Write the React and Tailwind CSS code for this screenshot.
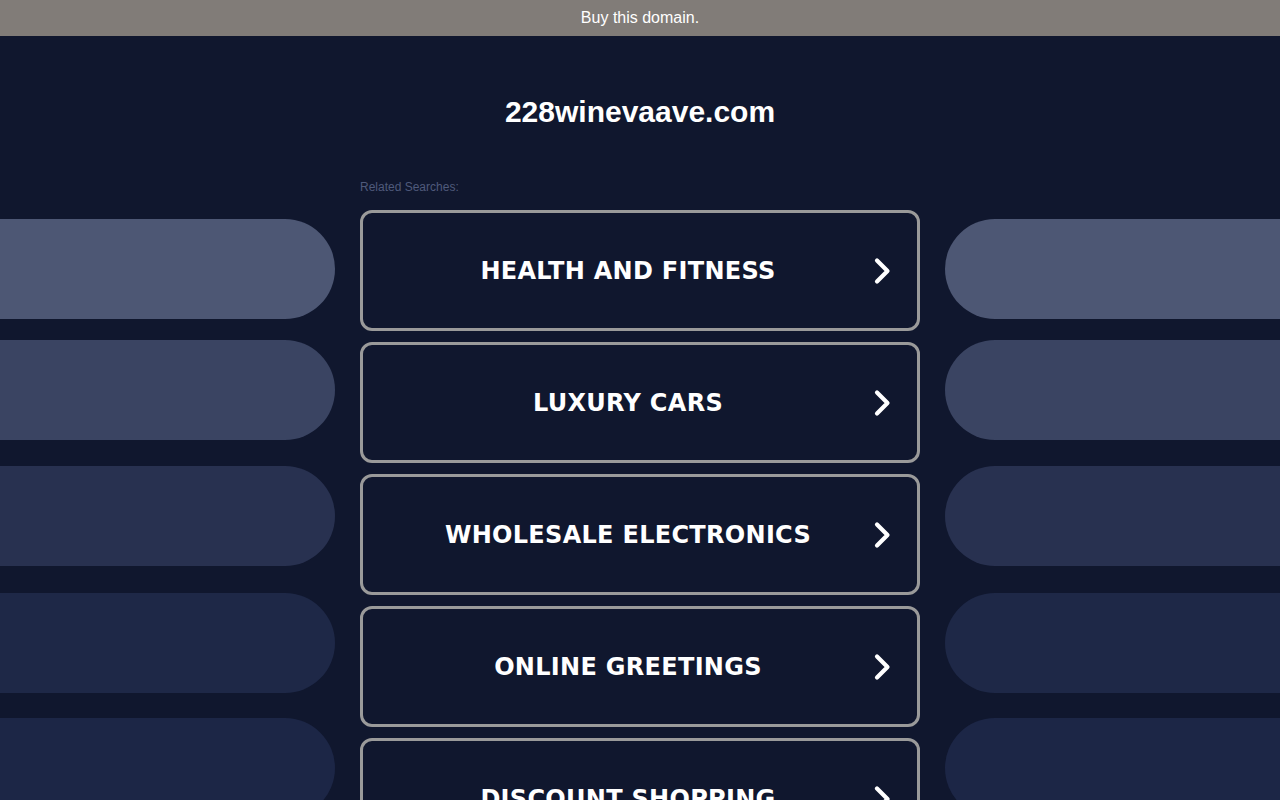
import React from "react";

const items = [
  "HEALTH AND FITNESS",
  "LUXURY CARS",
  "WHOLESALE ELECTRONICS",
  "ONLINE GREETINGS",
  "DISCOUNT SHOPPING",
];

const pills = [
  { top: "top-[219px]", color: "bg-[#4d5774]" },
  { top: "top-[340px]", color: "bg-[#3a4462]" },
  { top: "top-[466px]", color: "bg-[#283150]" },
  { top: "top-[593px]", color: "bg-[#1e2847]" },
  { top: "top-[718px]", color: "bg-[#1c2646]" },
];

function Chevron() {
  return (
    <svg width="22" height="30" viewBox="0 0 22 30" className="absolute right-[24px] top-1/2 -translate-y-1/2">
      <path d="M6 4.5 L16.5 15 L6 25.5" fill="none" stroke="white" strokeWidth="4.2" strokeLinecap="round" strokeLinejoin="round" />
    </svg>
  );
}

export default function App() {
  return (
    <div className="relative w-full h-[800px] overflow-hidden bg-[#10172e]" style={{ fontFamily: '"Liberation Sans", Arial, sans-serif' }}>
      <div className="h-[36px] bg-[#817c78] flex items-center justify-center text-white text-[16px]">
        Buy this domain.
      </div>
      {pills.map((p, i) => (
        <React.Fragment key={i}>
          <div className={`absolute left-0 w-[335px] h-[100px] rounded-r-[50px] ${p.top} ${p.color}`} />
          <div className={`absolute right-0 w-[335px] h-[100px] rounded-l-[50px] ${p.top} ${p.color}`} />
        </React.Fragment>
      ))}
      <div className="relative flex flex-col items-center">
        <h1 className="mt-[58px] text-white font-bold text-[30px] leading-[36px]">228winevaave.com</h1>
        <div className="w-[560px] mt-[50px]">
          <div className="text-[12px] text-[#4f5a7b] leading-[14px]">Related Searches:</div>
          <div className="mt-[16px] flex flex-col gap-[11px]">
            {items.map((t) => (
              <div key={t} className="relative h-[121px] border-[3px] border-[#9a9a9a] rounded-[12px] flex items-center justify-center pr-[24px]">
                <span className="text-white font-bold text-[24px] tracking-[0.3px]" style={{ fontFamily: '"DejaVu Sans", Verdana, sans-serif' }}>{t}</span>
                <Chevron />
              </div>
            ))}
          </div>
        </div>
      </div>
    </div>
  );
}
